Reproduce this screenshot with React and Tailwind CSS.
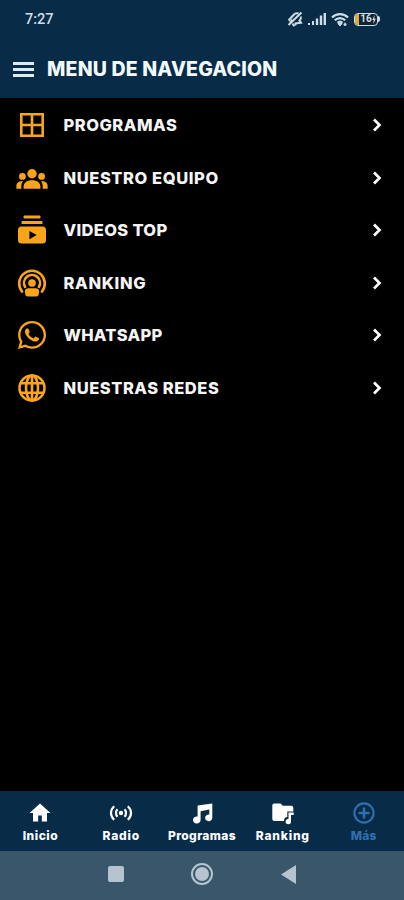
import { FaWhatsapp } from "react-icons/fa";

function GridIcon() {
  return (
    <svg viewBox="0 0 32 32" className="h-8 w-8" fill="none" stroke="currentColor" strokeWidth="2.6">
      <path d="M5.3 5.3h21.4v21.4H5.3zM16 5.3v21.4M5.3 16h21.4" />
    </svg>
  );
}

function TeamIcon() {
  return (
    <svg viewBox="0 0 32 32" className="h-8 w-8" fill="currentColor">
      <circle cx="16" cy="11.8" r="4.7" />
      <circle cx="6.4" cy="14.4" r="3.4" />
      <circle cx="25.6" cy="14.4" r="3.4" />
      <path d="M7.6 26.7v-2.2c0-3.8 3.2-6.3 8.4-6.3s8.4 2.5 8.4 6.3v2.2zM.4 26.7v-2.6c0-3.1 2.2-5.1 6.8-4.8-1.3 1.4-1.9 3-1.9 5v2.4zM31.6 26.7v-2.6c0-3.1-2.2-5.1-6.8-4.8 1.3 1.4 1.9 3 1.9 5v2.4z" />
    </svg>
  );
}

function VideosIcon() {
  return (
    <svg viewBox="0 0 32 32" className="h-8 w-8" fill="currentColor">
      <rect x="7.6" y="1.5" width="16.8" height="3.1" rx=".8" />
      <rect x="5.5" y="7" width="21" height="3" rx=".8" />
      <path
        fillRule="evenodd"
        d="M5.6 12.4h20.8a3.6 3.6 0 0 1 3.6 3.6v10a3.6 3.6 0 0 1-3.6 3.6H5.6A3.6 3.6 0 0 1 2 26V16a3.6 3.6 0 0 1 3.6-3.6zm7.8 4.6v8.2l7.4-4.1z"
      />
    </svg>
  );
}

function PodcastIcon() {
  return (
    <svg viewBox="0 0 32 32" className="h-8 w-8" fill="currentColor">
      <g fill="none" stroke="currentColor" strokeWidth="2.6" strokeLinecap="round">
        <path d="M6.1 24.6a12.8 12.8 0 1 1 19.8 0" />
        <path d="M9.1 20a8 8 0 1 1 13.8 0" />
      </g>
      <circle cx="16" cy="16" r="3.8" />
      <path d="M12.5 21.3h7c2.4 0 3.9 1.7 3.6 3.8l-.4 2.2c-.2 1.4-1.2 2.2-2.6 2.2h-8.2c-1.4 0-2.4-.8-2.6-2.2l-.4-2.2c-.3-2.1 1.2-3.8 3.6-3.8z" />
    </svg>
  );
}

function GlobeIcon() {
  return (
    <svg viewBox="0 0 32 32" className="h-8 w-8" fill="none" stroke="currentColor" strokeWidth="2.6">
      <circle cx="16" cy="16" r="12.5" />
      <ellipse cx="16" cy="16" rx="6" ry="12.5" />
      <path d="M16 3.5v25M4.8 11.3h22.4M4.8 20.7h22.4" />
    </svg>
  );
}

function HomeIcon() {
  return (
    <svg viewBox="0 0 24 24" className="h-6 w-6" fill="currentColor">
      <path d="M12 2.5 22.5 12H19v8.5h-5.2v-6h-3.6v6H5V12H1.5z" />
    </svg>
  );
}

function RadioIcon() {
  return (
    <svg viewBox="0 0 24 24" className="h-6 w-6" fill="none" stroke="currentColor" strokeWidth="2.2">
      <circle cx="12" cy="12" r="2.2" fill="currentColor" stroke="none" />
      <path d="M8.5 8.2c-2 2-2 5.6 0 7.6M15.5 8.2c2 2 2 5.6 0 7.6M5.2 5.2c-4.3 3.9-4.3 9.7 0 13.6M18.8 5.2c4.3 3.9 4.3 9.7 0 13.6" />
    </svg>
  );
}

function MusicIcon() {
  return (
    <svg viewBox="0 0 24 24" className="h-6 w-6" fill="currentColor">
      <path d="M22.3 2.5v14.3a3.6 3.4 0 1 1-3-3.3V8.5l-8.7 1.8v8.6a3.8 3.5 0 1 1-3-3.4V4.5z" />
    </svg>
  );
}

function FolderMusicIcon() {
  return (
    <svg viewBox="0 0 24 24" className="h-6 w-6" fill="currentColor">
      <path d="M3.3 2.5h6.2l2.3 2.2h8.5c1.1 0 2 .9 2 2v3.8h-6v5.4c-2.2.1-3.5 1.7-3.3 4.2H3.3a2 2 0 0 1-2-2V4.5c0-1.1.9-2 2-2z" />
      <path d="M17.5 11.5h5.2v2.6h-2.7v6.4a2.7 2.7 0 1 1-2.5-2.6z" />
    </svg>
  );
}

function PlusCircleIcon() {
  return (
    <svg viewBox="0 0 24 24" className="h-6 w-6" fill="none" stroke="currentColor" strokeWidth="2.1">
      <circle cx="12" cy="12" r="9.6" />
      <path d="M12 6.5v11M6.5 12h11" strokeWidth="2.5" />
    </svg>
  );
}

const MENU_ITEMS = [
  { label: "PROGRAMAS", icon: <GridIcon />, tracking: "tracking-[0.5px]" },
  { label: "NUESTRO EQUIPO", icon: <TeamIcon />, tracking: "tracking-[0.57px]" },
  { label: "VIDEOS TOP", icon: <VideosIcon />, tracking: "tracking-[0.32px]" },
  { label: "RANKING", icon: <PodcastIcon />, tracking: "tracking-[0.65px]" },
  { label: "WHATSAPP", icon: <FaWhatsapp className="h-8 w-8" />, tracking: "tracking-[0.27px]" },
  { label: "NUESTRAS REDES", icon: <GlobeIcon />, tracking: "tracking-[0.53px]" },
];

const TABS = [
  { label: "Inicio", icon: <HomeIcon />, color: "text-white", tracking: "tracking-[0.5px]" },
  { label: "Radio", icon: <RadioIcon />, color: "text-white", tracking: "tracking-[0.8px]" },
  { label: "Programas", icon: <MusicIcon />, color: "text-white", tracking: "tracking-[0.4px]" },
  { label: "Ranking", icon: <FolderMusicIcon />, color: "text-white", tracking: "tracking-[0.8px]" },
  { label: "Más", icon: <PlusCircleIcon />, color: "text-[#2f6fae]", tracking: "tracking-[0.2px]" },
];

function StatusBar() {
  return (
    <div className="flex h-[38px] items-center justify-between pr-6 pl-[25px] text-[#cfdde6]">
      <span className="pt-[2px] font-[Roboto,sans-serif] text-[14.5px] font-medium">7:27</span>
      <div className="flex items-center gap-[5px]">
        {/* muted bell */}
        <svg viewBox="0 0 16 16" className="h-4 w-4" fill="none" stroke="currentColor" strokeWidth="2">
          <path d="M1.5 9.5 6.5 4c1.5-1.8 3-2.3 5-1.5M13.8 5.5c.4 1.5 0 2.8-1.3 4.2l1.5 2-6.5.8M3 11.5l2.5-2.7M5.5 12.5l1.3 2 2.7-1.5" />
          <path d="M1.5 14 14.5 1.5" />
        </svg>
        <svg viewBox="0 0 18 14" className="h-3.5 w-[18px]" fill="currentColor">
          <path d="M0 11h2v2H0zM4 9h2v4H4zM7.8 6.5h2.4V13H7.8zM11.8 3.5h2.4V13h-2.4zM15.6 1H18v12h-2.4z" />
        </svg>
        <svg viewBox="0 0 18 15" className="h-[15px] w-[18px]" fill="none" stroke="currentColor" strokeWidth="2.2">
          <path d="M1 5.5c4.5-4.5 11.5-4.5 16 0M3.8 8.3c3-3 7.4-3 10.4 0M6.5 10.8c1.5-1.5 3.5-1.5 5 0" />
          <path d="M7 11.5h4L9 14z" strokeWidth="1" fill="currentColor" />
          <path d="M14 10.8v3.2M12.5 12.5h3" strokeWidth="1.5" />
        </svg>
        <div className="flex items-center">
          <div className="flex h-[13px] w-6 overflow-hidden rounded-[4px] border-[1.5px] border-current bg-[#102536]">
            <div className="w-1 bg-[#e0aa3e]" />
            <div className="flex flex-1 items-center justify-center font-[Roboto,sans-serif] text-[10px] font-bold leading-none">
              16
              <svg viewBox="0 0 4 9" className="h-[9px] w-1" fill="currentColor">
                <path d="M2.5 0 .3 5h1.4L1.3 9 3.8 3.7H2.3z" />
              </svg>
            </div>
          </div>
          <div className="h-1.5 w-0.5 rounded-r bg-current" />
        </div>
      </div>
    </div>
  );
}

export default function App() {
  return (
    <div className="flex h-[900px] w-[404px] flex-col overflow-hidden bg-black font-[Inter,sans-serif] text-white">
      <header className="h-[98px] bg-[#082b47]">
        <StatusBar />
        <div className="flex h-[62px] items-center gap-[13px] pl-[13px]">
          <button type="button" aria-label="Menu" className="flex w-[21px] flex-col gap-[3px]">
            <span className="h-[3px] bg-[#dcebee]" />
            <span className="h-[3px] bg-[#dcebee]" />
            <span className="h-[3px] bg-[#dcebee]" />
          </button>
          <h1 className="whitespace-nowrap pt-[2px] text-[19.5px] font-extrabold tracking-[0.17px] text-[#f2fafc]">
            MENU DE NAVEGACION
          </h1>
        </div>
      </header>

      <main className="flex-1 pt-[1px]">
        {MENU_ITEMS.map((item) => (
          <div key={item.label} className="flex h-[52.5px] items-center pr-[22px] pl-4">
            <span className="text-[#f9a51a]">{item.icon}</span>
            <span className={`ml-[15.5px] flex-1 whitespace-nowrap pt-px text-[16.5px] font-extrabold text-[#f5f5f5] ${item.tracking}`}>
              {item.label}
            </span>
            <svg viewBox="0 0 10 14" className="h-3.5 w-2.5" fill="none" stroke="currentColor" strokeWidth="2.7">
              <path d="m2 1.5 5.5 5.5L2 12.5" />
            </svg>
          </div>
        ))}
      </main>

      <nav className="grid h-[60px] grid-cols-5 bg-[#082b47]">
        {TABS.map((tab) => (
          <div key={tab.label} className={`flex flex-col items-center pt-[10px] ${tab.color}`}>
            {tab.icon}
            <span className={`mt-[3px] text-xs font-extrabold leading-4 ${tab.tracking}`}>{tab.label}</span>
          </div>
        ))}
      </nav>

      <div className="flex h-[49px] items-center justify-center bg-[#3a566b] pb-[3px] text-[#b5c4ce]">
        <div className="flex w-[86px] justify-center">
          <span className="h-4 w-4 rounded-[2px] bg-current" />
        </div>
        <div className="flex w-[87px] justify-center">
          <span className="flex h-[22px] w-[22px] items-center justify-center rounded-full border-2 border-current">
            <span className="h-3.5 w-3.5 rounded-full bg-current" />
          </span>
        </div>
        <div className="flex w-[86px] justify-center">
          <svg viewBox="0 0 15 19" className="h-[19px] w-[15px]" fill="currentColor">
            <path d="M15 0v19L0 9.5z" />
          </svg>
        </div>
      </div>
    </div>
  );
}
